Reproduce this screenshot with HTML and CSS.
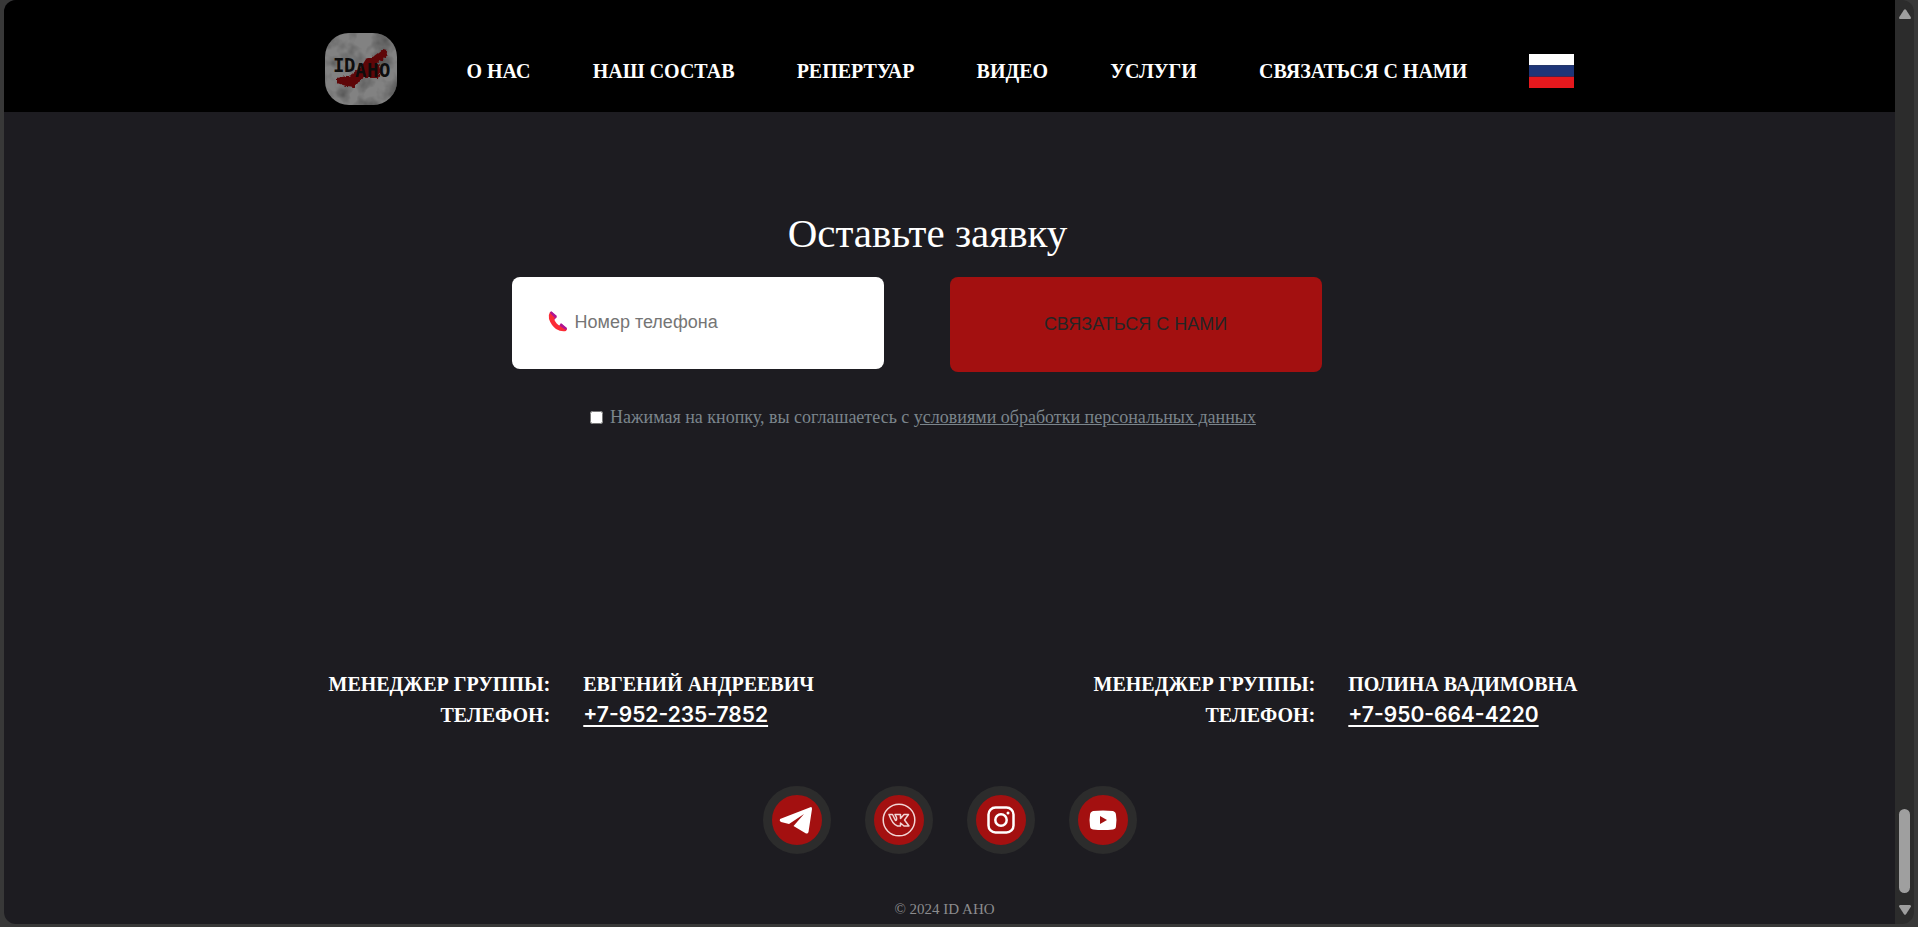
FILE: index.html
```html
<!DOCTYPE html>
<html lang="ru">
<head>
<meta charset="utf-8">
<title>ID AHO</title>
<link rel="stylesheet" href="styles.css">
</head>
<body>
<div class="window">
  <div class="page">
    <header class="header">
      <div class="container header-row">
        <a class="logo" href="#" aria-label="ID AHO">
          <svg viewBox="0 0 72 72" width="72" height="72">
            <defs>
              <filter id="marble" x="0" y="0" width="100%" height="100%" color-interpolation-filters="sRGB">
                <feTurbulence type="fractalNoise" baseFrequency="0.06" numOctaves="3" seed="4"/>
                <feColorMatrix values="0 0 0 0 0.25  0 0 0 0 0.25  0 0 0 0 0.25  1.4 0 0 0 -0.55"/>
              </filter>
              <filter id="rough" x="-10%" y="-10%" width="120%" height="120%" color-interpolation-filters="sRGB">
                <feTurbulence type="fractalNoise" baseFrequency="0.25" numOctaves="2" result="noise"/>
                <feDisplacementMap in="SourceGraphic" in2="noise" scale="5" xChannelSelector="R" yChannelSelector="G"/>
                <feGaussianBlur stdDeviation="0.5"/>
              </filter>
            </defs>
            <rect width="72" height="72" fill="#828282"/>
            <rect width="72" height="72" filter="url(#marble)"/>
            <path d="M12 45L27 42L36 34L41 26L50 23L58 17L62 18L61 25L53 29L56 40L53 45L38 45L34 47L29 54L21 53L12 50Z" fill="#5e0608" filter="url(#rough)"/>
            <g class="logo-text">
              <text x="8" y="39">I</text><text x="19" y="39">D</text>
              <text x="30" y="44">A</text><text x="42" y="44">H</text><text x="54" y="44">O</text>
            </g>
          </svg>
        </a>
        <nav class="nav">
          <a href="#">О НАС</a>
          <a href="#">НАШ СОСТАВ</a>
          <a href="#">РЕПЕРТУАР</a>
          <a href="#">ВИДЕО</a>
          <a href="#">УСЛУГИ</a>
          <a href="#">СВЯЗАТЬСЯ С НАМИ</a>
          <a class="flag" href="#" aria-label="Русский">
            <svg viewBox="0 0 45 34" width="45" height="34"><path fill="#fff" d="M0 0h45v11.3H0z"/><path fill="#1d3578" d="M0 11.3h45v11.4H0z"/><path fill="#e5181d" d="M0 22.7h45V34H0z"/></svg>
          </a>
        </nav>
      </div>
    </header>

    <main class="request">
      <h1>Оставьте заявку</h1>
      <form class="form">
        <div class="fields">
          <label class="phone">
            <svg viewBox="0 0 20 22" width="20" height="22" aria-hidden="true">
              <path fill="#b01593" d="M4 1L9 6L6 9L2 3ZM13 12L19 18L16 20L11 15Z"/>
              <path fill="#fb2c36" d="M2 1Q0 4 1 8Q3 14 8 18Q13 21 18 20L19 18L14 14L12 15Q8 13 6 8L8 6L3 1Z"/>
              <path fill="#b01593" d="M3 0L9 5L7 7L2 2ZM14 13L19 17L18 19L12 15Z"/>
            </svg>
            <input type="tel" placeholder="Номер телефона" aria-label="Номер телефона">
          </label>
          <button class="submit" type="button">СВЯЗАТЬСЯ С НАМИ</button>
        </div>
        <div class="consent">
          <input type="checkbox" id="agree">
          <label for="agree">Нажимая на кнопку, вы соглашаетесь с <a href="#">условиями обработки персональных данных</a></label>
        </div>
      </form>
    </main>

    <footer class="footer">
      <div class="contacts">
        <dl class="contact">
          <dt>МЕНЕДЖЕР ГРУППЫ<span>:</span></dt><dd>ЕВГЕНИЙ АНДРЕЕВИЧ</dd>
          <dt>ТЕЛЕФОН<span>:</span></dt><dd><a href="tel:+79522357852">+7-952-235-7852</a></dd>
        </dl>
        <dl class="contact">
          <dt>МЕНЕДЖЕР ГРУППЫ<span>:</span></dt><dd>ПОЛИНА ВАДИМОВНА</dd>
          <dt>ТЕЛЕФОН<span>:</span></dt><dd><a href="tel:+79506644220">+7-950-664-4220</a></dd>
        </dl>
      </div>
      <div class="social">
        <a href="#" aria-label="Telegram"><svg viewBox="0 0 50 50"><path fill="#fff" d="M39 12L8 24Q7 26 9 27L17 29L32 19L21.500 31L34 38.500Q36 39 36.500 37L40 14Q40 12 39 12Z"/></svg></a>
        <a href="#" aria-label="VK"><svg viewBox="0 0 50 50" fill="none" stroke="#f1d5d5"><circle cx="25" cy="25" r="15.800" stroke-width="1.500"/><path stroke-width="1.500" stroke-linejoin="round" d="M15 19.500H18.500L21.500 25.500Q23 25.500 22.500 22.500L21 19.500H26.500V23.500L30 19.500H34.500L30.500 25L35 31H30L26.500 28V31H23.500Q18.500 29.500 15 19.500Z"/></svg></a>
        <a href="#" aria-label="Instagram"><svg viewBox="0 0 50 50" fill="none" stroke="#fff"><rect x="12.500" y="12.500" width="25" height="25" rx="7" stroke-width="2.500"/><circle cx="25" cy="25" r="5.700" stroke-width="2.500"/><circle cx="32" cy="18" r="1.500" fill="#fff" stroke="none"/></svg></a>
        <a href="#" aria-label="YouTube"><svg viewBox="0 0 50 50"><path fill="#fff" fill-rule="evenodd" d="M15 16Q25 15 35 16Q38 17 38 20Q39 25 38 31Q38 34 35 34.500Q25 35.500 15 34.500Q12 34 12 31Q11 25 12 20Q12 17 15 16ZM22 21V29L29 25Z"/></svg></a>
      </div>
      <p class="copy">© 2024 ID AHO</p>
    </footer>
  </div>
  <div class="scrollbar" aria-hidden="true">
    <svg width="12" height="10" viewBox="0 0 12 10"><path fill="#9f9f9f" d="M5 .8Q6 -.4 7 .8L12 8.500Q12 10 11 10H1Q0 10 0 8.500Z"/></svg>
    <div class="thumb"></div>
    <svg width="12" height="10" viewBox="0 0 12 10"><path fill="#9f9f9f" d="M5 9.200Q6 10.400 7 9.200L12 1.500Q12 0 11 0H1Q0 0 0 1.500Z"/></svg>
  </div>
</div>
</body>
</html>
```
FILE: styles.css
```css
* {
  box-sizing: border-box;
}

body {
  margin: 0;
  padding: 0 4px 3px;
  background: #383838;
  color: #fff;
  font-family: "Liberation Serif", serif;
}

a {
  color: inherit;
}

.window {
  display: flex;
  min-height: calc(100vh - 3px);
  border-radius: 12px;
  overflow: hidden;
}

.page {
  flex: 1;
  display: flex;
  flex-direction: column;
  background: #1d1c21;
}

.container {
  width: 100%;
  max-width: 1250px;
  margin: 0 auto;
}

.header {
  padding: 33px 0 7px;
  background: #000;
}

.header-row {
  display: flex;
  align-items: center;
  gap: 70px;
}

.logo,
.logo svg {
  display: block;
}

.logo {
  flex: none;
  border-radius: 24px;
  overflow: hidden;
}

.logo-text {
  fill: #0d0d0d;
  font: bold 19px "DejaVu Sans Mono", monospace;
}

.nav {
  flex: 1;
  display: flex;
  align-items: center;
  justify-content: space-between;
  padding-top: 3px;
  font-size: 20px;
  font-weight: bold;
  line-height: 24px;
}

.nav a {
  text-decoration: none;
}

.flag svg {
  display: block;
}

.request {
  width: 100%;
  max-width: 876px;
  margin: 0 auto;
  padding: 97px 66px 0 0;
}

h1 {
  margin: 0 0 20px 22px;
  font-size: 41px;
  font-weight: normal;
  line-height: 48px;
  text-align: center;
}

.fields {
  display: grid;
  grid-template-columns: 1fr 1fr;
  align-items: start;
  gap: 66px;
}

.phone {
  display: flex;
  align-items: center;
  gap: 7px;
  height: 92px;
  padding: 0 36px 2px;
  border-radius: 8px;
  background: #fff;
}

.phone input {
  flex: 1;
  min-width: 0;
  padding: 0;
  border: 0;
  outline: 0;
  background: none;
  font: 18px "Liberation Sans", sans-serif;
}

.phone input::placeholder {
  color: #757575;
}

.submit {
  height: 95px;
  padding: 0;
  border: 0;
  border-radius: 8px;
  background: #a31010;
  color: #252525;
  font: 18px "Liberation Sans", sans-serif;
}

.consent {
  display: flex;
  align-items: center;
  justify-content: center;
  gap: 7px;
  margin: 34px 0 0 13px;
  color: #7b858c;
  font-size: 18px;
  line-height: 22px;
}

.consent input {
  width: 13px;
  height: 13px;
  margin: 0;
}

.footer {
  margin-top: auto;
  padding-bottom: 5px;
}

.contacts {
  display: flex;
  justify-content: space-between;
  max-width: 1256px;
  margin: 0 auto;
  padding-left: 7px;
}

.contact {
  display: grid;
  grid-template-columns: auto auto;
  column-gap: 33px;
  margin: 0 0 55px;
  font-size: 20px;
  font-weight: bold;
  line-height: 31px;
}

.contact dt {
  text-align: right;
}

.contact dd {
  margin: 0;
}

.contact span,
.contact a {
  font-family: Inter, sans-serif;
  line-height: 24px;
}

.contact a {
  font-size: 21px;
  font-weight: 600;
  text-decoration-thickness: 2px;
  text-underline-offset: 3px;
}

.social {
  display: flex;
  justify-content: center;
  gap: 34px;
}

.social a {
  width: 68px;
  height: 68px;
  border: 9px solid #2c2c2c;
  border-radius: 50%;
  background: #a31010;
}

.social svg {
  display: block;
}

.copy {
  margin: 45px 10px 0 0;
  color: #8c8c8e;
  font-size: 15px;
  line-height: 20px;
  text-align: center;
}

.scrollbar {
  width: 19px;
  display: flex;
  flex-direction: column;
  align-items: center;
  padding: 9px 0;
  background: #2c2c2c;
}

.thumb {
  width: 11px;
  height: 84px;
  margin: auto 0 12px;
  border-radius: 6px;
  background: #9f9f9f;
}
```
